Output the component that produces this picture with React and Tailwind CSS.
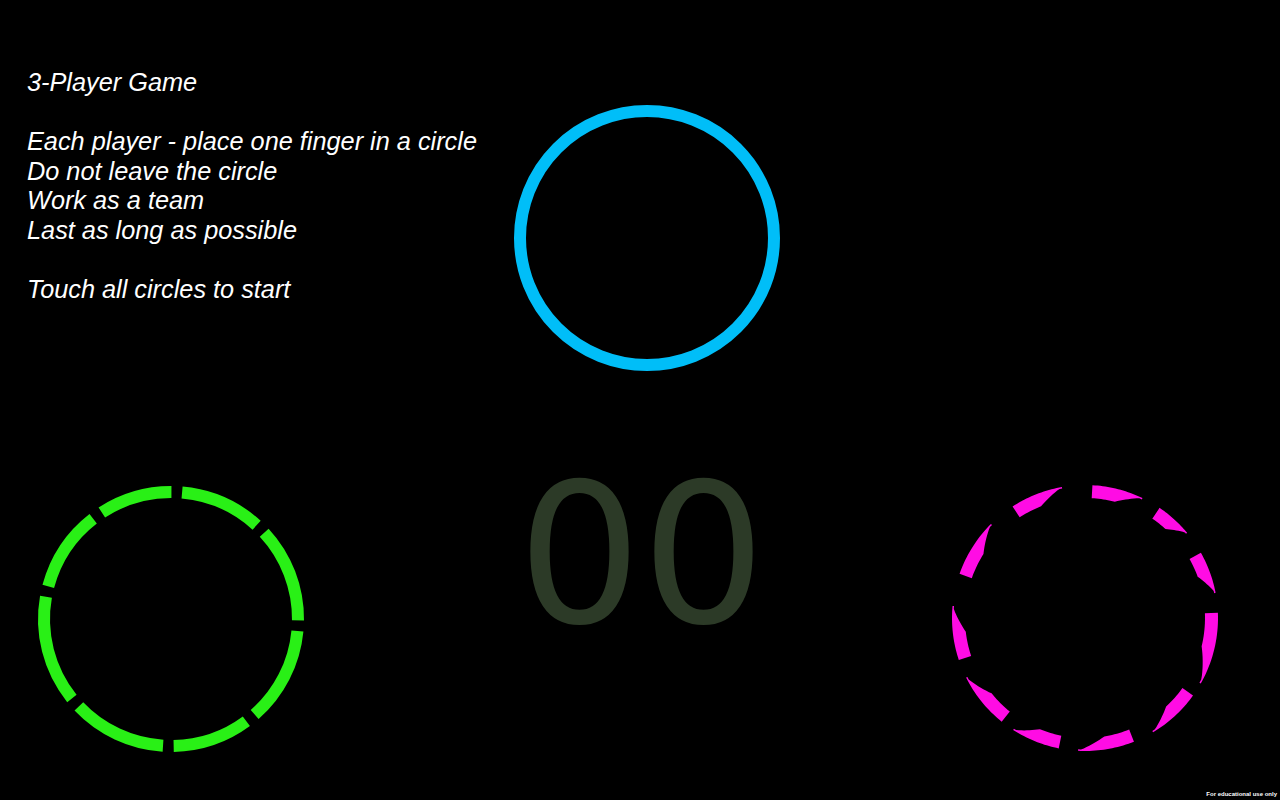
import React from 'react';

// gap centres (deg, 0 = right, clockwise) of the dashed green ring
const GREEN_GAPS = [-125.4, -87.4, -45.2, 3, 51.2, 91.2, 138.9, 192.5];

// tapered magenta pieces: [thick end, pointed end]
const PINK_PIECES = [
  [-86.8, -64.4],
  [-55.9, -39.8],
  [-29.4, -10.9],
  [-2.3, 29.5],
  [35.7, 59.2],
  [68.4, 93],
  [101.4, 122.7],
  [128.8, 153.4],
  [161.6, 185.2],
  [199.4, 225],
  [237, 260],
];

const polar = (c, r, deg) => {
  const a = (deg * Math.PI) / 180;
  return [c + r * Math.cos(a), c + r * Math.sin(a)];
};

const arcPath = (c, r, a0, a1) => {
  const [x0, y0] = polar(c, r, a0);
  const [x1, y1] = polar(c, r, a1);
  const large = a1 - a0 > 180 ? 1 : 0;
  return `M ${x0} ${y0} A ${r} ${r} 0 ${large} 1 ${x1} ${y1}`;
};

// outer edge on the circle, inner edge closes in toward the pointed end
const wedgePoints = (c, rOut, width, a0, a1) => {
  const steps = 20;
  const pts = [];
  for (let i = 0; i <= steps; i++) {
    pts.push(polar(c, rOut, a0 + ((a1 - a0) * i) / steps));
  }
  for (let i = steps; i >= 0; i--) {
    const t = i / steps;
    const w = Math.max(1.5, width * Math.min(1, (1 - t) * 2));
    pts.push(polar(c, rOut - w, a0 + (a1 - a0) * t));
  }
  return pts.map((p) => p.join(',')).join(' ');
};

function BlueRing() {
  return (
    <svg width="280" height="280" viewBox="0 0 280 280" className="shrink-0">
      <circle cx="140" cy="140" r="127" fill="none" stroke="#00bef8" strokeWidth="12" />
    </svg>
  );
}

function GreenRing() {
  const half = 2.4;
  const gaps = [...GREEN_GAPS, GREEN_GAPS[0] + 360];
  return (
    <svg width="280" height="280" viewBox="0 0 280 280" className="shrink-0">
      {gaps.slice(0, -1).map((g, i) => (
        <path
          key={i}
          d={arcPath(140, 127, g + half, gaps[i + 1] - half)}
          fill="none"
          stroke="#29f016"
          strokeWidth="12"
        />
      ))}
    </svg>
  );
}

function PinkRing() {
  return (
    <svg width="280" height="280" viewBox="0 0 280 280" className="shrink-0">
      {PINK_PIECES.map(([a0, a1], i) => (
        <polygon key={i} points={wedgePoints(140, 133, 13, a0, a1)} fill="#ff0ce4" />
      ))}
    </svg>
  );
}

export default function App() {
  return (
    <div className="relative flex h-[800px] w-full overflow-hidden bg-black">
      {/* left column: instructions + player 1 */}
      <div className="flex w-[500px] shrink-0 flex-col">
        <div className="pl-[27px] pt-[68px] font-['Liberation_Sans',Arial,sans-serif] text-[25.3px] italic leading-[29.5px] text-white">
          <p>3-Player Game</p>
          <p className="mt-[29.5px]">Each player - place one finger in a circle</p>
          <p>Do not leave the circle</p>
          <p>Work as a team</p>
          <p>Last as long as possible</p>
          <p className="mt-[29.5px]">Touch all circles to start</p>
        </div>
        <div className="mb-[41px] ml-[31px] mt-auto">
          <GreenRing />
        </div>
      </div>

      {/* middle column: player 2 + score */}
      <div className="ml-[7px] flex w-[280px] shrink-0 flex-col pt-[98px]">
        <BlueRing />
        <div className="-mx-[20px] mt-[79px] pr-[11px] text-center font-['DejaVu_Sans',sans-serif] text-[195px] leading-none text-[#2c3a27]">
          00
        </div>
      </div>

      {/* right column: player 3 */}
      <div className="ml-[158px] flex flex-col justify-end pb-[42px]">
        <PinkRing />
      </div>

      <div className="absolute bottom-[3px] right-[3px] font-['Liberation_Sans',Arial,sans-serif] text-[6px] font-bold leading-none text-white">
        For educational use only
      </div>
    </div>
  );
}
